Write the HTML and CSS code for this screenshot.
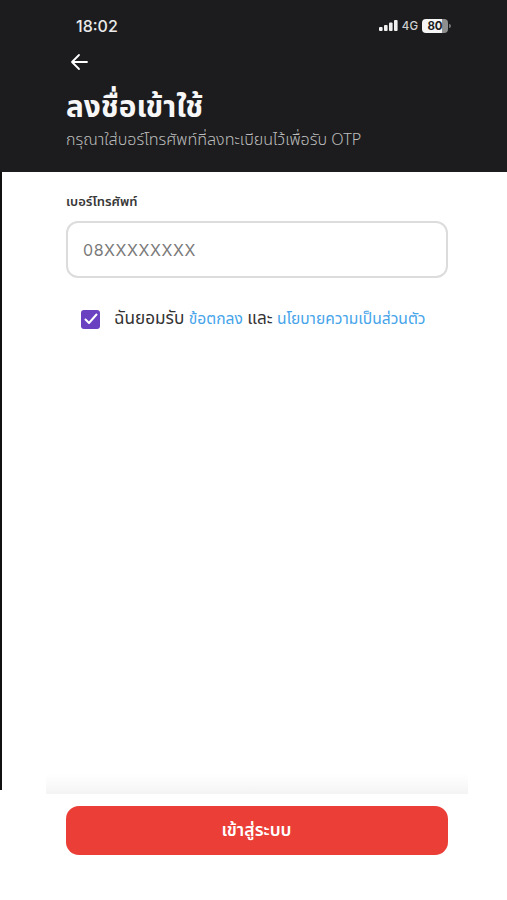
FILE: index.html
```html
<!DOCTYPE html>
<html lang="th">
<head>
<meta charset="utf-8">
<title>ลงชื่อเข้าใช้</title>
<link rel="stylesheet" href="styles.css">
</head>
<body>
<div class="screen">
  <header class="top">
    <div class="status">
      <span class="time">18:02</span>
      <div class="status-icons">
        <svg class="signal" width="19" height="12" viewBox="0 0 19 12"><rect x="0" y="7" width="3.6" height="4" rx="1"/><rect x="5" y="5" width="3.6" height="6" rx="1"/><rect x="10" y="2.5" width="3.6" height="8.5" rx="1"/><rect x="15" y="0" width="3.6" height="11" rx="1"/></svg>
        <span class="net">4G</span>
        <span class="battery">80</span>
        <span class="battery-tip"></span>
      </div>
    </div>
    <button class="back" aria-label="กลับ">
      <svg width="20" height="20" viewBox="0 0 20 20" fill="none" stroke="#fff" stroke-width="1.8" stroke-linecap="round" stroke-linejoin="round"><path d="M18 10H3M10 3 3 10l7 7"/></svg>
    </button>
    <h1 class="title">ลงชื่อเข้าใช้</h1>
    <p class="subtitle">กรุณาใส่บอร์โทรศัพท์ที่ลงทะเบียนไว้เพื่อรับ OTP</p>
  </header>
  <main class="content">
    <label class="field-label" for="phone">เบอร์โทรศัพท์</label>
    <input class="field" id="phone" type="text" placeholder="08XXXXXXXX">
    <div class="consent">
      <span class="check">
        <svg width="14" height="12" viewBox="0 0 14 12" fill="none" stroke="#fff" stroke-width="2" stroke-linecap="round" stroke-linejoin="round"><path d="M1.5 6.5 5 10l7.5-8.5"/></svg>
      </span>
      <span class="consent-text">ฉันยอมรับ <a href="#">ข้อตกลง</a> และ <a href="#">นโยบายความเป็นส่วนตัว</a></span>
    </div>
  </main>
  <footer class="bottom">
    <div class="fade"></div>
    <button class="submit">เข้าสู่ระบบ</button>
  </footer>
</div>
</body>
</html>
```
FILE: styles.css
```css
* { box-sizing: border-box; }
html, body { margin: 0; padding: 0; background: #fff; }
body { font-family: "Noto Sans Thai", "Noto Sans Thai Looped", "Noto Sans", "DejaVu Sans", sans-serif; }
.screen { width: 507px; height: 900px; display: flex; flex-direction: column; overflow: hidden; }
.top { height: 172px; background: #1c1c1e; color: #fff; padding: 16px 0 0 66px; display: flex; flex-direction: column; align-items: flex-start; }
.status { width: 385px; height: 20px; padding-left: 10px; display: flex; justify-content: space-between; align-items: center; }
.time { font-family: Inter, sans-serif; font-size: 16px; font-weight: 500; color: #eaeaea; }
.status-icons { display: flex; align-items: center; gap: 4px; }
.signal { fill: #f0f0f0; }
.net { font-family: Inter, sans-serif; font-size: 11.5px; font-weight: 500; color: #cfcfcf; }
.battery { width: 26px; height: 14px; border-radius: 4px; background: linear-gradient(90deg, #f5f5f5 75%, #8e8e8e 75%); color: #1c1c1e; font-family: Inter, sans-serif; font-size: 11.5px; font-weight: 700; line-height: 14px; text-align: center; }
.battery-tip { width: 2px; height: 4px; margin-left: -3px; background: #777; border-radius: 0 2px 2px 0; }
.back { width: 24px; height: 24px; margin: 14px 0 0 1px; padding: 0; background: none; border: 0; display: flex; align-items: center; justify-content: center; }
.title { margin: 14px 0 0; font-size: 29.8px; line-height: 40px; font-weight: 700; color: #f7f7f7; }
.subtitle { margin: 1px 0 0; font-size: 16.1px; line-height: 22px; font-weight: 300; color: #bcbcbc; }
.content { height: 618px; border-left: 2px solid #111; padding: 20px 0 0 64px; display: flex; flex-direction: column; align-items: flex-start; }
.field-label { font-size: 13px; line-height: 21px; font-weight: 600; color: #383838; }
.field { width: 382px; height: 57px; margin-top: 8px; padding: 0 15px; border: 2px solid #dcdcdc; border-radius: 12px; background: #fff; outline: 0; font-family: Inter, sans-serif; font-size: 16px; letter-spacing: 0.6px; color: #333; }
.field::placeholder { color: #7a7a7a; opacity: 1; }
.consent { margin: 30px 0 0 15px; display: flex; align-items: center; gap: 14px; }
.check { width: 19px; height: 19px; border-radius: 3px; background: #6a41c0; display: flex; align-items: center; justify-content: center; }
.consent-text { font-size: 17.2px; line-height: 22px; font-weight: 400; color: #333; white-space: nowrap; }
.consent-text a { font-size: 15.6px; font-weight: 400; color: #46a4ea; text-decoration: none; }
.bottom { position: relative; flex: 1; padding: 16px 0 0 6px; display: flex; flex-direction: column; align-items: center; }
.fade { position: absolute; left: 46px; top: -16px; width: 422px; height: 20px; background: linear-gradient(#fff, #f4f4f4); }
.submit { width: 382px; height: 49px; border: 0; border-radius: 13px; background: #ea3e36; color: #fff; font-family: inherit; font-size: 17.5px; font-weight: 600; padding: 0; }
```
